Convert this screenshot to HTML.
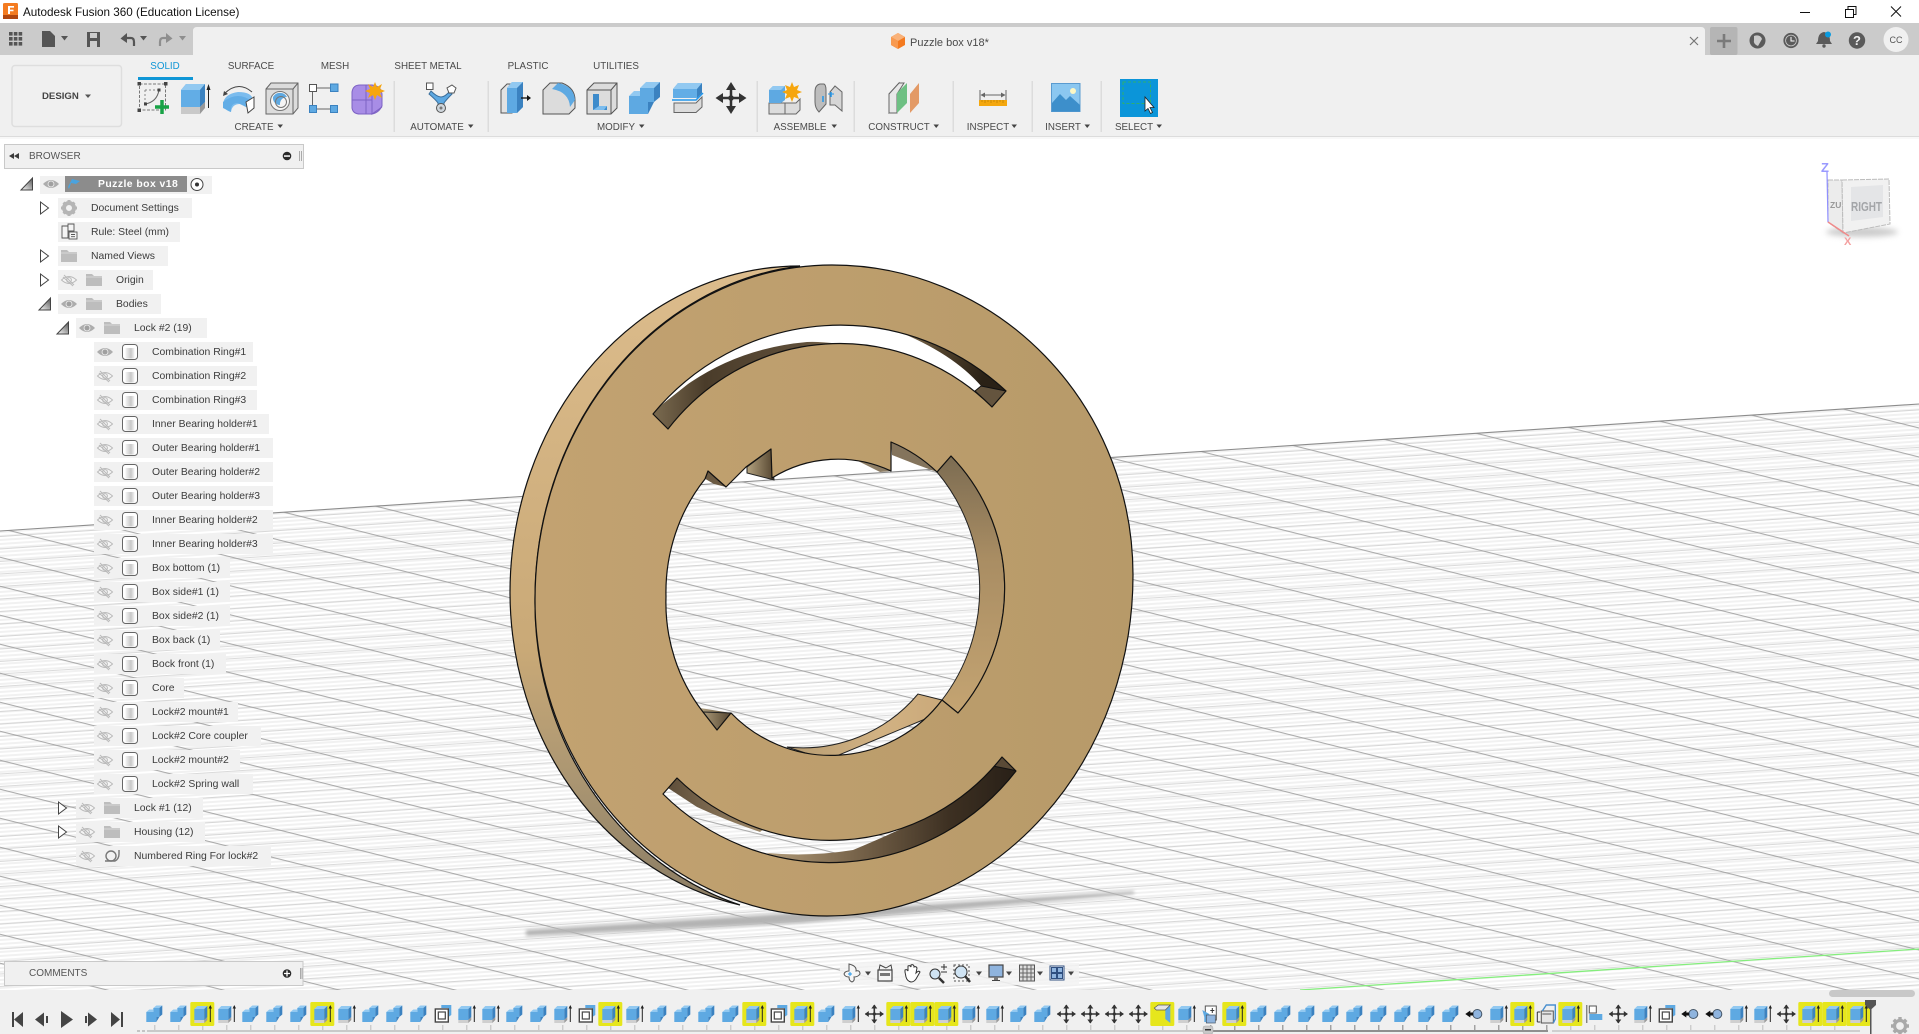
<!DOCTYPE html>
<html><head><meta charset="utf-8"><title>Autodesk Fusion 360</title>
<style>
html,body{margin:0;padding:0;width:1919px;height:1034px;overflow:hidden;background:#fff;font-family:"Liberation Sans",sans-serif}
svg.a{position:absolute;left:0;top:0}
.t{position:absolute;white-space:nowrap;line-height:14px;height:14px;font-size:10.4px;color:#3c3c3c}
.c{transform:translateX(-50%);font-size:9.8px;color:#4a4a4a}
.l{font-size:9.8px;color:#4a4a4a;transform:translateX(-50%)}
</style></head><body>
<svg class="a" width="1919" height="1034" viewBox="0 0 1919 1034" xmlns="http://www.w3.org/2000/svg">
<defs>
<pattern id="pf" width="200" height="4" patternUnits="userSpaceOnUse" patternTransform="matrix(1 -.066 0 1 0 531)"><rect width="200" height="4" fill="#fff"/><rect width="200" height="2" fill="#f1f1f1"/></pattern>
<pattern id="pa" width="200" height="29" patternUnits="userSpaceOnUse" patternTransform="matrix(1 .25 0 1 0 121.7)"><rect y="0" width="200" height="1.1" fill="#9c9c9c" fill-opacity=".85"/></pattern>
<pattern id="pb" width="200" height="12.5" patternUnits="userSpaceOnUse" patternTransform="matrix(1 -.066 0 1 0 548.5)"><rect y="0" width="200" height="1" fill="#cbcbcb" fill-opacity=".7"/></pattern>
<pattern id="tk" width="24" height="5" patternUnits="userSpaceOnUse" patternTransform="translate(154.3 1025)"><rect width="1" height="5" fill="#bdbdbd"/></pattern>
<pattern id="tk2" width="24" height="5" patternUnits="userSpaceOnUse" patternTransform="translate(154.3 1025)"><rect width="1" height="5" fill="#8a8a8a"/></pattern>
<linearGradient id="gface" x1="0" x2="1" y1="0" y2="0"><stop offset="0" stop-color="#c2a271"/><stop offset=".5" stop-color="#bd9e6d"/><stop offset="1" stop-color="#b79a69"/></linearGradient>
<linearGradient id="gside" gradientUnits="userSpaceOnUse" x1="650" y1="270" x2="650" y2="905"><stop offset="0" stop-color="#dcbc8c"/><stop offset=".6" stop-color="#c9a977"/><stop offset=".8" stop-color="#ab9672"/><stop offset="1" stop-color="#8a7c64"/></linearGradient>
<linearGradient id="gw1" gradientUnits="userSpaceOnUse" x1="650" y1="0" x2="870" y2="0"><stop offset="0" stop-color="#7d6d52"/><stop offset=".25" stop-color="#4a3c2a"/><stop offset=".7" stop-color="#5f4f3a"/><stop offset="1" stop-color="#a89272"/></linearGradient>
<linearGradient id="gw2" gradientUnits="userSpaceOnUse" x1="887" y1="325" x2="985" y2="375"><stop offset="0" stop-color="#9d8766"/><stop offset=".5" stop-color="#54452f"/><stop offset="1" stop-color="#2a2116"/></linearGradient>
<linearGradient id="gw3" gradientUnits="userSpaceOnUse" x1="767" y1="0" x2="1010" y2="0"><stop offset="0" stop-color="#b09a78"/><stop offset=".35" stop-color="#7a664c"/><stop offset=".75" stop-color="#3d3022"/><stop offset="1" stop-color="#2a2118"/></linearGradient>
<linearGradient id="gw4" gradientUnits="userSpaceOnUse" x1="665" y1="0" x2="765" y2="0"><stop offset="0" stop-color="#5c4c38"/><stop offset="1" stop-color="#a08a6a"/></linearGradient>
<linearGradient id="gw5" gradientUnits="userSpaceOnUse" x1="0" y1="456" x2="0" y2="713"><stop offset="0" stop-color="#7c6c52"/><stop offset=".4" stop-color="#a98d63"/><stop offset="1" stop-color="#c4a472"/></linearGradient>
<linearGradient id="gw6" gradientUnits="userSpaceOnUse" x1="787" y1="0" x2="942" y2="0"><stop offset="0" stop-color="#b69c72"/><stop offset=".6" stop-color="#d2b283"/><stop offset="1" stop-color="#caa97a"/></linearGradient>
<linearGradient id="gw7" x1="0" x2="1" y1="0" y2="0"><stop offset="0" stop-color="#b3a27f"/><stop offset="1" stop-color="#54442f"/></linearGradient>
<linearGradient id="gtri" x1="0" x2="1" y1="1" y2="0"><stop offset="0" stop-color="#fff"/><stop offset="1" stop-color="#555"/></linearGradient>
<linearGradient id="gb" x1="0" x2="1"><stop offset="0" stop-color="#f4f4f4"/><stop offset=".6" stop-color="#c8c8c8"/><stop offset="1" stop-color="#f4f4f4"/></linearGradient>

<g id="eye"><path d="M-8 0Q0-8 8 0Q0 8-8 0Z" fill="#adadad"/><circle r="3.4" fill="#e8e8e8"/><circle r="2.5" fill="#a0a0a0"/></g>
<g id="eo"><path d="M-7.500 0Q0-7 7.500 0Q0 7-7.500 0Z" fill="#f4f4f4" stroke="#bababa"/><circle r="2.400" fill="none" stroke="#bababa"/><path d="M-5-5L5 5M-6-3L4 6" stroke="#bababa"/></g>
<g id="fo"><path d="M-8-6H-2L0-4H8V6H-8Z" fill="#bdbdbd"/><path d="M-8-3H8" stroke="#d8d8d8"/></g>
<g id="bo"><rect x="-7.500" y="-7.500" width="15" height="15" rx="3" fill="#fff" stroke="#666"/><rect x="-4.500" y="-4" width="9" height="10.500" fill="url(#gb)"/></g>
<path id="tc" d="M-4-6L4 0L-4 6Z" fill="#fff" stroke="#444"/>
<path id="to" d="M-5.500 6L6 -6V6Z" fill="url(#gtri)" stroke="#444"/>

<g id="C"><path d="M-1-6H5V3H2V8H-8V-2H-1Z" fill="#5ea9e2"/><path d="M-1-6L2-8.500H8L5-6Z" fill="#92c9f1"/><path d="M5-6L8-8.500V.5L5 3Z" fill="#3b82c0"/><path d="M-8-2L-5-4.500H-1V-2Z" fill="#92c9f1"/><path d="M2 3H5L2 8Z" fill="#3b82c0"/></g>
<g id="ec"><path d="M-8-5H2V6H-8Z" fill="#5ea9e2"/><path d="M-8-5L-5-8H5L2-5Z" fill="#92c9f1"/><path d="M2-5L5-8V3L2 6Z" fill="#3b82c0"/><path d="M-8 6H2V9H-8Z" fill="#cfcfcf"/><path d="M2 6L5 3V6L2 9Z" fill="#9a9a9a"/><path d="M8-8V8" stroke="#222" fill="none"/><path d="M6.300-5.500L8-9L9.700-5.500Z" fill="#222"/></g>
<g id="E"><use href="#ec"/></g>
<g id="Y"><rect x="-12" y="-12" width="24" height="24" rx="1.500" fill="#e6e61c"/><use href="#ec"/></g>
<g id="S"><path d="M-1-9H9V1L6 3V-6H-1Z" fill="#5ea9e2"/><rect x="-7" y="-5" width="13" height="13" fill="#fff" stroke="#444" stroke-width="1.400"/><rect x="-4" y="-2" width="7" height="7" fill="#fff" stroke="#444" stroke-width="1.200"/></g>
<g id="M"><path d="M0-9V9M-9 0H9" stroke="#333" stroke-width="1.600"/><path d="M-3-5.500L0-9.500L3-5.500ZM-3 5.500L0 9.500L3 5.500ZM-5.500-3L-9.500 0L-5.500 3ZM5.500-3L9.500 0L5.500 3Z" fill="#333"/><circle r="1.600" fill="#333"/></g>
<g id="J"><circle cx="3" r="4.500" fill="#8fb4de" stroke="#456"/><path d="M-1 0H-5" stroke="#111" stroke-width="3"/><path d="M-4-3.500L-9 0L-4 3.500Z" fill="#111"/></g>
<g id="F"><rect x="-12" y="-12" width="24" height="24" rx="1.500" fill="#e6e61c"/><path d="M-8-6L-4-9H8L8 9L3 5V-4H-6Z" fill="#5ea9e2"/><path d="M-8-6L-4-9H8L3-4H-6Z" fill="#e5e5e5" stroke="#555" stroke-width=".7"/></g>
<g id="B"><path d="M-5-8H6V6H-5Z" fill="#fff" stroke="#555"/><path d="M-8-4L-1 0V8H-6V3Z" fill="#5ea9e2"/><rect x="-4" y="1" width="9" height="8" fill="#8fb4de" stroke="#456" stroke-width=".7"/><path d="M2-6V-1M0-3.500H4" stroke="#333"/></g>
<g id="D"><rect x="-5" y="-3" width="12" height="12" fill="#e6e6e6" stroke="#555"/><path d="M-4-3L0-9H9V5L7 9" fill="none" stroke="#4a90cf" stroke-width="1.400"/><path d="M-9-2V8M-9 8H-6M-9-2H-6" stroke="#333"/><path d="M-4 0H5" stroke="#555"/></g>
<g id="A"><path d="M-7.500-9V9" stroke="#555"/><rect x="-5" y="-8" width="7" height="7" fill="#fff" stroke="#555"/><rect x="-5" y="0" width="13" height="6" fill="#5ea9e2"/></g>
</defs>

<!-- viewport / ground -->
<rect x="0" y="139" width="1919" height="851" fill="#fff"/>
<polygon points="0,531 1919,404 1919,990 0,990" fill="url(#pf)"/>
<polygon points="0,531 1919,404 1919,990 0,990" fill="url(#pb)"/>
<polygon points="0,531 1919,404 1919,990 0,990" fill="url(#pa)"/>
<path d="M0 531L1919 404" stroke="#8c8c8c" stroke-width="1.100"/>
<path d="M1300 990L1919 949" stroke="#84ee7c" stroke-width="1.300"/>

<!-- ring shadow -->
<polygon points="526,930 1134,891 1134,894 800,923 526,936" fill="#b3b3b3" style="filter:blur(1.800px)"/>

<!-- outer side wall -->
<path d="M800 266A290 327 0 0 0 510 593A290 320 0 0 0 740 905A292 316 0 0 1 535 600A297 335 0 0 1 800 266Z" fill="url(#gside)" stroke="#111" stroke-width="1.200"/>

<!-- interior walls -->
<path d="M951 456A190 190 0 0 1 958 713L942 700A182 182 0 0 0 937 472Z" fill="url(#gw5)" stroke="#222"/>
<path d="M942 700L918 694A150 150 0 0 1 787 747L827 760L942 712Z" fill="url(#gw6)" stroke="#222"/>
<path d="M700 708L731 713L717 735Z" fill="url(#gw7)"/>
<path d="M703 712L731 713" stroke="#222"/>
<path d="M747 467L771 449L774 480L747 473Z" fill="url(#gw7)" stroke="#222"/>
<path d="M707 470L726 487L714 484L702 477Z" fill="#6b5a42"/>
<path d="M891 442Q915 452 937 472L915 464L892 455Z" fill="#84745c"/>
<path d="M856 460Q875 462 891 471L880 472Z" fill="#8d7d64"/>
<!-- slot walls -->
<path d="M650 414L668 435L750 380L870 352L867 349Q830 341 807 342Q740 348 688 384Z" fill="url(#gw1)"/>
<path d="M884 326Q950 350 981 386L975 391L992 412L1012 391L960 340Z" fill="url(#gw2)"/>
<path d="M981 386L1006 391L992 407L975 391Z" fill="#64543e" stroke="#111"/>
<path d="M668 788L697 807Q725 820 760 832L775 820L690 765Z" fill="url(#gw4)"/>
<path d="M767 853Q810 857 853 850Q920 822 953 802L993 766L1000 750L1025 772L980 830L900 870L800 870Z" fill="url(#gw3)"/>
<path d="M993 766L1002 755L1018 771Z" fill="#5a4a36" stroke="#111"/>

<!-- front face -->
<path fill-rule="evenodd" fill="url(#gface)" stroke="#111" stroke-width="1.200" stroke-linejoin="round" d="M535 600A297 335 0 0 1 832 265A301 310 0 0 1 1133 575A306 341 0 0 1 827 916A292 316 0 0 1 535 600Z
M653 414A245 250 0 0 1 1006 391L992 407A220 228 0 0 0 668 429Z
M663 794A236 236 0 0 0 1016 771L1002 757A219 219 0 0 1 677 778Z
M666 597A165 175 0 0 1 705 479L708 471L726 487L746 467L771 449L772 478A125 125 0 0 1 891 471L891 442A150 150 0 0 1 937 472L951 456A190 190 0 0 1 958 713L942 700A139 139 0 0 1 731 713L717 730L703 712A170 175 0 0 1 666 597Z"/>

<!-- nav cube -->
<g>
<ellipse cx="1862" cy="232" rx="36" ry="5" fill="#ccc" style="filter:blur(3px)"/>
<path d="M1828 180L1842 180L1843 233L1828 222Z" fill="#ececec" stroke="#bbb" stroke-dasharray="5 1"/>
<path d="M1842 180L1889 179L1890 224L1843 233Z" fill="#f1f1f1" stroke="#bbb" stroke-dasharray="5 1"/>
<path d="M1851 187L1883 185L1883 217L1851 221Z" fill="#e4e5e7"/>
<path d="M1827 172L1828 222" stroke="#8f8fff" stroke-width="1.200"/>
<path d="M1828 222L1849 236" stroke="#f08a8a" stroke-width="1.500"/>
<text x="1821" y="172" font-size="13" font-weight="bold" fill="#9a9aff" font-family="Liberation Sans,sans-serif">Z</text>
<text x="1844" y="245" font-size="11" font-weight="bold" fill="#f4a0a0" font-family="Liberation Sans,sans-serif">X</text>
<text x="1851" y="211" font-size="12.500" font-weight="bold" fill="#a3a5a8" font-family="Liberation Sans,sans-serif" textLength="31" lengthAdjust="spacingAndGlyphs">RIGHT</text>
<text x="1830" y="208" font-size="8.500" font-weight="bold" fill="#999" font-family="Liberation Sans,sans-serif">ZU</text>
</g>

<!-- chrome -->
<rect x="0" y="23" width="1919" height="32" fill="#cbcbcb"/>
<path d="M193 55V31Q193 27 197 27H1701Q1705 27 1705 31V55Z" fill="#f0f0f0"/>
<rect x="0" y="55" width="1919" height="81" fill="#f0f0f0"/>
<rect x="0" y="136" width="1919" height="1" fill="#dcdcdc"/>
<rect x="0" y="137" width="1919" height="2" fill="#f8f8f8"/>
<rect x="1710" y="27" width="27.500" height="28" rx="2" fill="#b5b5b5"/>
<path d="M1724 34V48M1717 41H1731" stroke="#7a7a7a" stroke-width="2.600"/>

<!-- app logo -->
<path d="M3 4Q3 3 5 3H17Q18 3 18 5V18Q18 19 17 19H5Q3 19 3 18Z" fill="#f47b20"/><rect x="3" y="15" width="15" height="4" fill="#b0460f"/>
<path d="M8 6H14V7.600H10V9.600H13.500V11.200H10V14H8Z" fill="#fff"/>

<!-- window controls -->
<path d="M1800 12.500H1810" stroke="#111"/>
<path d="M1845.500 9.500H1853.500V17.500H1845.500Z M1848 9.500V6.500H1856V14.500H1853.500" fill="none" stroke="#111"/>
<path d="M1891 6.500L1901 16.500M1901 6.500L1891 16.500" stroke="#111"/>

<!-- qat -->
<g fill="#555"><rect x="9" y="32" width="3.600" height="3.600"/><rect x="13.800" y="32" width="3.600" height="3.600"/><rect x="18.600" y="32" width="3.600" height="3.600"/><rect x="9" y="37" width="3.600" height="3.600"/><rect x="13.800" y="37" width="3.600" height="3.600"/><rect x="18.600" y="37" width="3.600" height="3.600"/><rect x="9" y="42" width="3.600" height="3.600"/><rect x="13.800" y="42" width="3.600" height="3.600"/><rect x="18.600" y="42" width="3.600" height="3.600"/>
<path d="M42 31H50L55 36V47H42Z"/><path d="M61 36H68L64.500 40.500Z"/>
<path d="M87 32H100V47H87Z"/><path d="M140 36H147L143.500 40.500Z"/></g>
<rect x="90" y="33" width="7" height="5" fill="#cbcbcb"/><rect x="90" y="41" width="7" height="6" fill="#cbcbcb"/>
<path d="M125 38H131Q134 38 134 42V46" fill="none" stroke="#555" stroke-width="2.200"/><path d="M127 33L120.500 38.500L127 43Z" fill="#555"/>
<path d="M168 38H163Q160 38 160 42V46" fill="none" stroke="#8e8e8e" stroke-width="2.200"/><path d="M166 33L172.500 38.500L166 43Z" fill="#8e8e8e"/><path d="M179 36H186L182.500 40.500Z" fill="#8e8e8e"/>

<!-- doc icon -->
<path d="M898 33L905 37V45L898 49L891 45V37Z" fill="#f47a1f"/><path d="M898 33L905 37L898 41L891 37Z" fill="#f9b27a"/><path d="M891 37L898 41V49L891 45Z" fill="#f89a50"/>
<path d="M1690 37L1698 45M1698 37L1690 45" stroke="#777" stroke-width="1.200"/>

<!-- top-right icons -->
<circle cx="1757.500" cy="40.500" r="8" fill="#5a5a5a"/><path d="M1754 36Q1760 34 1762 39L1758 46Q1753 44 1754 40Z" fill="#cbcbcb"/><circle cx="1791" cy="40.500" r="8" fill="#5a5a5a" stroke="#cbcbcb" stroke-width=".8"/><circle cx="1791" cy="40.500" r="5.400" fill="none" stroke="#cbcbcb" stroke-width=".8"/><path d="M1791 37V41H1794.500" stroke="#fff" fill="none"/>
<path d="M1824 32Q1830 33 1830 41L1832 44H1816L1818 41Q1818 33 1824 32Z" fill="#5a5a5a"/><circle cx="1824" cy="46" r="1.700" fill="#5a5a5a"/><circle cx="1828" cy="34.500" r="3" fill="#0a9be0"/>
<circle cx="1857" cy="40.500" r="8.200" fill="#5a5a5a"/><text x="1857" y="45" text-anchor="middle" font-size="13" font-weight="bold" fill="#f0f0f0" font-family="Liberation Sans,sans-serif">?</text>
<circle cx="1896" cy="39.500" r="12.500" fill="#f0f0f0"/>

<!-- design button -->
<rect x="12" y="65.500" width="109.500" height="61" rx="3" fill="#f0f0f0" stroke="#dedede" stroke-width="1.500"/>
<path d="M85 94.500H91L88 98Z" fill="#555"/>
<!-- tab underline -->
<rect x="138" y="77" width="55" height="3" fill="#0f96d6"/>
<!-- separators -->
<g fill="#dcdcdc"><rect x="393.500" y="81" width="1.500" height="51"/><rect x="487.500" y="81" width="1.500" height="51"/><rect x="756.500" y="81" width="1.500" height="51"/><rect x="853.500" y="81" width="1.500" height="51"/><rect x="952.500" y="81" width="1.500" height="51"/><rect x="1031.500" y="81" width="1.500" height="51"/><rect x="1100.500" y="81" width="1.500" height="51"/></g>

<!-- carets -->
<g fill="#444"><path d="M277.500 124.500H283L280.200 128Z"/><path d="M468 124.500H473.500L470.700 128Z"/><path d="M639 124.500H644.500L641.700 128Z"/><path d="M831.500 124.500H837L834.200 128Z"/><path d="M933.500 124.500H939L936.200 128Z"/><path d="M1011.500 124.500H1017L1014.200 128Z"/><path d="M1084.500 124.500H1090L1087.200 128Z"/><path d="M1156.500 124.500H1162L1159.200 128Z"/></g>

<!-- sketch -->
<g>
<rect x="139.500" y="84" width="26" height="26" fill="none" stroke="#777" stroke-dasharray="3 1.500"/>
<g fill="#444"><rect x="137.500" y="82" width="3.500" height="3.500"/><rect x="164" y="82" width="3.500" height="3.500"/><rect x="137.500" y="108.500" width="3.500" height="3.500"/></g>
<path d="M145 104Q157 102 159 90" fill="none" stroke="#666"/><path d="M145 90H159M145 90V104" stroke="#888" stroke-dasharray="2 2"/><rect x="144" y="102.500" width="3" height="3" fill="#444"/><rect x="157.500" y="88.500" width="3" height="3" fill="#444"/>
<path d="M162 100V114M155 107H169" stroke="#18a246" stroke-width="3.500"/>
</g>
<!-- extrude -->
<path d="M181 90L186 84H205V102L200 107H181Z" fill="#62ade6"/><path d="M181 90L186 84H205L200 90Z" fill="#92c9f1"/><path d="M200 90L205 84V102L200 107Z" fill="#3b82c0"/><path d="M181 107H200V114H181Z" fill="#c9c9c9"/><path d="M200 107L205 102V108L200 114Z" fill="#999"/><path d="M208.500 87V108" stroke="#222"/><path d="M206.500 90L208.500 84L210.500 90Z" fill="#222"/>
<!-- revolve -->
<path d="M223 104Q224 94 238 92Q252 92 253 100L249 108L240 104Q232 104 231 112Q224 110 223 104Z" fill="#7bbcee"/><path d="M223 102Q238 90 253 102L248 108L238 103Q230 103 231 112L223 108Z" fill="#62ade6"/><path d="M246 102L254 97V108L248 113Z" fill="#fff" stroke="#444"/><path d="M224 94Q238 80 252 92" fill="none" stroke="#444"/><path d="M224 91L223 96L228 94Z" fill="#444"/>
<!-- hole -->
<path d="M266 89L271 83H298V108L293 114H266Z" fill="#dcdcdc" stroke="#666"/><path d="M266 89H293V114M293 89L298 83" fill="none" stroke="#666"/><circle cx="280" cy="101" r="9.500" fill="#f5f5f5" stroke="#777"/><path d="M273 97A8 8 0 0 1 287 97A7 7 0 0 0 280 105A7 7 0 0 1 273 97Z" fill="#5ea9e2"/><circle cx="281" cy="102" r="5.500" fill="none" stroke="#777"/>
<!-- rectangular pattern -->
<path d="M316 88H330M312.500 92V105M316 109H330" stroke="#666"/><rect x="309.500" y="84.500" width="7" height="7" fill="#fff" stroke="#555"/><rect x="330.500" y="84" width="7.500" height="7.500" fill="#5ea9e2" stroke="#3b82c0"/><rect x="309.500" y="105.500" width="7" height="7" fill="#5ea9e2" stroke="#3b82c0"/><rect x="330.500" y="105.500" width="7" height="7" fill="#5ea9e2" stroke="#3b82c0"/>
<!-- form -->
<path d="M352 92Q353 85 360 85H372Q381 86 382 94V106Q378 114 370 114H360Q353 114 352 108Z" fill="#a88de6" stroke="#7d62c4"/><path d="M352 100H372M366 85V114M372 93V114L382 107" stroke="#7d62c4" fill="none"/><path d="M375 82L377 87L382 84L380 89L385 91L380 93L382 98L377 95L375 100L373 95L368 98L370 93L365 91L370 89L368 84L373 87Z" fill="#f6a60e"/>
<!-- automate -->
<path d="M431 91Q437 97 441 97Q445 97 450 91L452 94Q446 100 444 103V108H438V103Q436 100 429 94Z" fill="#5ea9e2" stroke="#3b6f9c"/><rect x="426.500" y="83" width="6.500" height="6.500" fill="#fff" stroke="#555"/><path d="M452 85L456 88L454 93L449 93L447 88Z" fill="#fff" stroke="#555"/><circle cx="441" cy="108" r="4.500" fill="#cfd6dc" stroke="#555"/><circle cx="441" cy="108" r="1.500" fill="#777"/>
<!-- press pull -->
<path d="M501 90L507 84H512V113H501Z" fill="#e2e2e2" stroke="#555"/><path d="M507 88L512 82H523V107L517 113H507Z" fill="#5ea9e2"/><path d="M507 88L512 82H523L517 88Z" fill="#92c9f1"/><path d="M517 88L523 82V107L517 113Z" fill="#3b82c0"/><path d="M521 98H529" stroke="#111" stroke-width="1.300"/><path d="M527 95L531 98L527 101Z" fill="#111"/>
<!-- fillet -->
<path d="M543 90L550 83H562Q575 88 575 100V108L569 114H543Z" fill="#dcdcdc" stroke="#555"/><path d="M558 83Q574 86 575 100L570 107Q569 92 552 89Z" fill="#5ea9e2"/>
<!-- chamfer -->
<path d="M587 90L594 83H617V108L611 114H587Z" fill="#dcdcdc" stroke="#555"/><path d="M587 90H611V114M611 90L617 83" fill="none" stroke="#555"/><path d="M593 94H599V106H607V110H593Z" fill="#3d8bcb"/><path d="M599 106H607L604 110H593Z" fill="#7bbcee"/>
<!-- combine large -->
<path d="M640 88H654V102H648V114H629V96H640Z" fill="#5ea9e2"/><path d="M640 88L646 82H660L654 88Z" fill="#92c9f1"/><path d="M654 88L660 82V97L654 102Z" fill="#3b82c0"/><path d="M629 96L634 91H640V96Z" fill="#92c9f1"/><path d="M648 102H654L648 114Z" fill="#3b82c0"/>
<!-- split -->
<path d="M673 89L678 83H702V93L697 98H673Z" fill="#62ade6"/><path d="M673 89L678 83H702L697 89Z" fill="#92c9f1"/><path d="M697 89L702 83V93L697 98Z" fill="#3b82c0"/><path d="M672 100H696L703 93" stroke="#2196ea" stroke-width="1.500" fill="none"/><path d="M674 103H696L702 97V107L696 112.500H674Z" fill="#dcdcdc" stroke="#666"/>
<!-- move -->
<path d="M731 88V108M721 98H741" stroke="#333" stroke-width="2.500"/><path d="M726 90L731 82L736 90ZM726 106L731 114L736 106ZM723 93L715.500 98L723 103ZM739 93L746.500 98L739 103Z" fill="#333"/><circle cx="731" cy="98" r="2.800" fill="#333"/>
<!-- assemble -->
<path d="M769 103H785V114H769Z" fill="#dcdcdc" stroke="#666"/><path d="M785 103H796L800 99V110L796 114H785Z" fill="#dcdcdc" stroke="#666"/><path d="M769 90L773 86H785V100L781 103H769Z" fill="#5ea9e2"/><path d="M769 90L773 86H785L781 90Z" fill="#92c9f1"/><path d="M792 82L794 87L799 85L797 90L802 92L797 94L799 99L794 97L792 102L790 97L785 99L787 94L782 92L787 90L785 85L790 87Z" fill="#f6a60e"/>
<!-- joint -->
<path d="M815 92Q815 85 820 84H824Q826 85 826 90V104L819 112Q815 108 815 102Z" fill="#bdbdbd" stroke="#666"/><path d="M830 92L835 86L842 92V111L835 105H830Z" fill="#d6d6d6" stroke="#666"/><path d="M823 96V102M831 92V97" stroke="#2196ea" stroke-width="1.500"/><path d="M828 94H834" stroke="#2196ea"/>
<!-- construct -->
<path d="M889 94L899 83V106L889 113Z" fill="#e0e0e0" stroke="#555"/><path d="M889 94L899 83H904L897 94V113H889Z" fill="#e8e8e8" stroke="#666"/><path d="M897 93L907 83V103L897 113Z" fill="#6ec083"/><path d="M910 94L919 83V103L910 113Z" fill="#e39a66"/>
<!-- inspect -->
<path d="M980 90V100M1006 90V100" stroke="#666"/><path d="M981 95H1005" stroke="#666"/><path d="M985 92.500L980.500 95L985 97.500ZM1001 92.500L1005.500 95L1001 97.500Z" fill="#666"/><rect x="979" y="100" width="28" height="6" fill="#f4a70e"/><path d="M982 100v2M985 100v3M988 100v2M991 100v3M994 100v2M997 100v3M1000 100v2M1003 100v3" stroke="#b87c00" stroke-width=".7"/>
<!-- insert -->
<rect x="1051.500" y="83.500" width="28.500" height="28" fill="#8bc7f0" stroke="#5a9bd0"/><path d="M1052 109V103L1060 94L1066 100L1070 96L1080 105V111.500H1052Z" fill="#3d8fcb"/><circle cx="1073" cy="91" r="3" fill="#fdf7c4"/>
<!-- select -->
<rect x="1120" y="79" width="38" height="38" fill="#0b95d9"/><rect x="1123" y="82" width="27.500" height="21.500" fill="none" stroke="#2fae6f" stroke-dasharray="3 2"/>
<path d="M1145 97V111L1148 108.500L1150.500 113.500L1152.500 112.500L1150 107.500L1154 107.500Z" fill="#fff" stroke="#222" stroke-width=".8"/>

<!-- browser panel -->
<rect x="4.500" y="144.500" width="299" height="24" fill="#f0f0f0" stroke="#c9c9c9"/>
<path d="M14 153V159L9 156ZM19 153V159L14 156Z" fill="#3a3a3a"/><circle cx="287" cy="156" r="4.300" fill="#2a2a2a"/><rect x="284" y="155.300" width="6" height="1.500" fill="#fff"/><path d="M299.500 151V161M301.500 151V161" stroke="#999" stroke-width=".8"/>

<!-- tree backgrounds -->
<g fill="#f1f1f1">
<rect x="40" y="176" width="172" height="18"/>
<rect x="58" y="198" width="134" height="20"/>
<rect x="58" y="222" width="122" height="20"/>
<rect x="58" y="246" width="110" height="20"/>
<rect x="58" y="270" width="95" height="20"/>
<rect x="58" y="294" width="103" height="20"/>
<rect x="76" y="318" width="131" height="20"/>
<rect x="94" y="342" width="159" height="20"/>
<rect x="94" y="366" width="163" height="20"/>
<rect x="94" y="390" width="163" height="20"/>
<rect x="94" y="414" width="175" height="20"/>
<rect x="94" y="438" width="179" height="20"/>
<rect x="94" y="462" width="179" height="20"/>
<rect x="94" y="486" width="179" height="20"/>
<rect x="94" y="510" width="179" height="20"/>
<rect x="94" y="534" width="179" height="20"/>
<rect x="94" y="558" width="136" height="20"/>
<rect x="94" y="582" width="136" height="20"/>
<rect x="94" y="606" width="136" height="20"/>
<rect x="94" y="630" width="126" height="20"/>
<rect x="94" y="654" width="132" height="20"/>
<rect x="94" y="678" width="90" height="20"/>
<rect x="94" y="702" width="144" height="20"/>
<rect x="94" y="726" width="167" height="20"/>
<rect x="94" y="750" width="146" height="20"/>
<rect x="94" y="774" width="159" height="20"/>
<rect x="76" y="798" width="127" height="20"/>
<rect x="76" y="822" width="129" height="20"/>
<rect x="76" y="846" width="195" height="20"/>
</g>
<rect x="65" y="176" width="122" height="16" fill="#8c8c8c"/>
<path d="M68 187L72 179L80 181L76 184L71 183L69 189Z" fill="#4aa3df"/>
<circle cx="197" cy="184.500" r="6" fill="#fff" stroke="#444"/><circle cx="197" cy="184.500" r="2" fill="#333"/>
<use href="#eye" x="51" y="184"/>
<use href="#to" x="26.500" y="184"/>
<use href="#tc" x="44.500" y="208"/><use href="#tc" x="44.500" y="256"/><use href="#tc" x="44.500" y="280"/>
<use href="#to" x="44.500" y="304"/><use href="#to" x="62.500" y="328"/>
<use href="#tc" x="62.500" y="808"/><use href="#tc" x="62.500" y="832"/>
<!-- gear -->
<g transform="translate(69 208)"><circle r="5" fill="none" stroke="#b5b5b5" stroke-width="4"/><path d="M-1.500-8H1.500V-5H-1.500ZM-1.500 5H1.500V8H-1.500ZM-8-1.500H-5V1.500H-8ZM5-1.500H8V1.500H5ZM-6.500-4.500L-4.500-6.500L-2.500-4.500L-4.500-2.500ZM6.500-4.500L4.500-6.500L2.500-4.500L4.500-2.500ZM-6.500 4.500L-4.500 6.500L-2.500 4.500L-4.500 2.500ZM6.500 4.500L4.500 6.500L2.500 4.500L4.500 2.500Z" fill="#b5b5b5"/></g>
<!-- rule icon -->
<g transform="translate(69 232)" fill="#f4f4f4" stroke="#555" stroke-width=".9"><path d="M-7-6H-1V6H-7Z"/><path d="M-1-8H5V-1H-1Z"/><rect x="0" y="0" width="8" height="7"/><path d="M2 2.500H6M2 4.700H6" fill="none"/></g>
<use href="#fo" x="69" y="256"/>
<use href="#eo" x="69" y="280"/><use href="#fo" x="94" y="280"/>
<use href="#eye" x="69" y="304"/><use href="#fo" x="94" y="304"/>
<use href="#eye" x="87" y="328"/><use href="#fo" x="112" y="328"/>
<use href="#eye" x="105" y="352"/>
<use href="#eo" x="105" y="376"/><use href="#eo" x="105" y="400"/><use href="#eo" x="105" y="424"/><use href="#eo" x="105" y="448"/><use href="#eo" x="105" y="472"/><use href="#eo" x="105" y="496"/><use href="#eo" x="105" y="520"/><use href="#eo" x="105" y="544"/><use href="#eo" x="105" y="568"/><use href="#eo" x="105" y="592"/><use href="#eo" x="105" y="616"/><use href="#eo" x="105" y="640"/><use href="#eo" x="105" y="664"/><use href="#eo" x="105" y="688"/><use href="#eo" x="105" y="712"/><use href="#eo" x="105" y="736"/><use href="#eo" x="105" y="760"/><use href="#eo" x="105" y="784"/>
<use href="#bo" x="130" y="352"/><use href="#bo" x="130" y="376"/><use href="#bo" x="130" y="400"/><use href="#bo" x="130" y="424"/><use href="#bo" x="130" y="448"/><use href="#bo" x="130" y="472"/><use href="#bo" x="130" y="496"/><use href="#bo" x="130" y="520"/><use href="#bo" x="130" y="544"/><use href="#bo" x="130" y="568"/><use href="#bo" x="130" y="592"/><use href="#bo" x="130" y="616"/><use href="#bo" x="130" y="640"/><use href="#bo" x="130" y="664"/><use href="#bo" x="130" y="688"/><use href="#bo" x="130" y="712"/><use href="#bo" x="130" y="736"/><use href="#bo" x="130" y="760"/><use href="#bo" x="130" y="784"/>
<use href="#eo" x="87" y="808"/><use href="#fo" x="112" y="808"/>
<use href="#eo" x="87" y="832"/><use href="#fo" x="112" y="832"/>
<use href="#eo" x="87" y="856"/>
<g transform="translate(112 856)" fill="none" stroke="#777" stroke-width="1.400"><circle cx="-1" cy="0" r="5"/><path d="M-7 5H3Q7 3 7-2V-6"/></g>

<!-- comments -->
<rect x="4.500" y="961.500" width="298.500" height="24" fill="#f0f0f0" stroke="#c9c9c9"/>
<circle cx="287" cy="973.500" r="4.300" fill="#2a2a2a"/><path d="M284 973.500H290M287 970.500V976.500" stroke="#fff" stroke-width="1.300"/><path d="M300.500 968V979M302 968V979" stroke="#999" stroke-width=".8"/>

<!-- navbar -->
<rect x="840" y="963" width="239" height="22" fill="#f3f3f3" fill-opacity=".85"/>
<g transform="translate(852 973)" fill="none" stroke="#555"><path d="M-3-9Q5-7 4-2Q8-3 8 1Q6 4 2 4Q3 8 0 9Q-3 8-3 4Q-7 4-8 1Q-7-2-3-2Z" fill="#f5f5f5"/><path d="M-2-1V3M-4 1H0" stroke="#2196ea"/></g>
<path d="M865 971.500H871L868 975.500ZM976 971.500H982L979 975.500ZM1006 971.500H1012L1009 975.500ZM1037 971.500H1043L1040 975.500ZM1068 971.500H1074L1071 975.500Z" fill="#444"/>
<g transform="translate(885 973)"><rect x="-7" y="-3" width="14" height="11" fill="#f5f5f5" stroke="#444" stroke-width="1.200"/><rect x="-5" y="0" width="10" height="3" fill="#777"/><path d="M-6-3L-5-8L1-5M1-5L6-8L7-3" fill="none" stroke="#444"/></g>
<g transform="translate(911 973)" fill="#fff" stroke="#333" stroke-width="1"><path d="M-6-1V-3Q-4-4-3-2V-7Q-1-8 0-6V-8Q2-9 3-7V-6Q5-7 6-5L5 0Q8-3 9-1L5 6Q3 9 0 9Q-4 8-5 4Z"/></g>
<g transform="translate(937 973)" fill="none" stroke="#333"><circle cx="-2" cy="1" r="5" fill="#cfe3f3"/><path d="M2 5L7 10" stroke-width="2.500"/><path d="M4-6H10M7-9V-3M4-1H10"/></g>
<g transform="translate(962 973)"><rect x="-8" y="-8" width="15" height="16" fill="none" stroke="#555" stroke-dasharray="2 2"/><circle cx="-1" cy="-1" r="6" fill="#cfe3f3" stroke="#333"/><path d="M3 3L8 9" stroke="#333" stroke-width="2.500"/></g>
<g transform="translate(996 973)"><rect x="-7" y="-8" width="14" height="12" fill="#8fb4de" stroke="#444" stroke-width="1.200"/><rect x="-2" y="4" width="4" height="3" fill="#777"/><path d="M-4 7.500H4" stroke="#444"/></g>
<g transform="translate(1027 973)"><rect x="-7.500" y="-8" width="15" height="16" fill="#ddd" stroke="#555"/><path d="M-4-8V8M0-8V8M4-8V8M-7.500-4H7.500M-7.500 0H7.500M-7.500 4H7.500" stroke="#666"/></g>
<g transform="translate(1057 973)" fill="#8fb4de" stroke="#2f4f80"><rect x="-7" y="-7" width="14" height="14" fill="#fff"/><rect x="-5.500" y="-5.500" width="5" height="5"/><rect x=".5" y="-5.500" width="5" height="5"/><rect x="-5.500" y=".5" width="5" height="5"/><rect x=".5" y=".5" width="5" height="5"/></g>

<!-- timeline -->
<rect x="0" y="990" width="1919" height="44" fill="#f0f0f0"/>
<rect x="1829" y="990" width="86" height="7" rx="3.500" fill="#c8c8c8"/>
<g fill="#444"><rect x="12" y="1012" width="2" height="15"/><path d="M23 1012V1027L14 1019.500Z"/>
<path d="M35 1019.500L44 1012.500V1026.500Z"/><rect x="46" y="1016" width="2" height="7"/>
<path d="M61 1011V1028L73 1019.500Z"/>
<rect x="85" y="1016" width="2" height="7"/><path d="M88 1012.500V1026.500L97 1019.500Z"/>
<path d="M111 1012V1027L120 1019.500Z"/><rect x="121" y="1012" width="2" height="15"/></g>
<rect x="137" y="1030" width="3" height="2" fill="#c4c4c4"/><rect x="142" y="1030" width="3" height="2" fill="#c4c4c4"/><rect x="147" y="1030" width="1061" height="2" fill="#c9c9c9"/>
<rect x="154" y="1025" width="1704" height="5" fill="url(#tk)"/>
<rect x="1204" y="1025" width="344" height="5" fill="url(#tk2)"/>
<rect x="1208" y="1030" width="340" height="2" fill="#8f8f8f"/>
<rect x="1552" y="1030" width="308" height="2" fill="#cfcfcf"/>
<rect x="1203" y="1026" width="10" height="8" rx="2" fill="#c8c8c8" stroke="#aaa" stroke-width=".5"/><rect x="1205" y="1029" width="6" height="1.500" fill="#333"/>
<g transform="translate(154.300 1014)">
<use href="#C"/><use href="#C" x="24"/><use href="#Y" x="48"/><use href="#E" x="72"/><use href="#C" x="96"/><use href="#C" x="120"/><use href="#C" x="144"/><use href="#Y" x="168"/><use href="#E" x="192"/><use href="#C" x="216"/><use href="#C" x="240"/><use href="#C" x="264"/><use href="#S" x="288"/><use href="#E" x="312"/><use href="#E" x="336"/><use href="#C" x="360"/><use href="#C" x="384"/><use href="#E" x="408"/><use href="#S" x="432"/><use href="#Y" x="456"/><use href="#E" x="480"/><use href="#C" x="504"/><use href="#C" x="528"/><use href="#C" x="552"/><use href="#C" x="576"/><use href="#Y" x="600"/><use href="#S" x="624"/><use href="#Y" x="648"/><use href="#C" x="672"/><use href="#E" x="696"/><use href="#M" x="720"/><use href="#Y" x="744"/><use href="#Y" x="768"/><use href="#Y" x="792"/><use href="#E" x="816"/><use href="#E" x="840"/><use href="#C" x="864"/><use href="#C" x="888"/><use href="#M" x="912"/><use href="#M" x="936"/><use href="#M" x="960"/><use href="#M" x="984"/><use href="#F" x="1008"/><use href="#E" x="1032"/><use href="#B" x="1056"/><use href="#Y" x="1080"/><use href="#C" x="1104"/><use href="#C" x="1128"/><use href="#C" x="1152"/><use href="#C" x="1176"/><use href="#C" x="1200"/><use href="#C" x="1224"/><use href="#C" x="1248"/><use href="#C" x="1272"/><use href="#C" x="1296"/><use href="#J" x="1320"/><use href="#E" x="1344"/><use href="#Y" x="1368"/><use href="#D" x="1392"/><use href="#Y" x="1416"/><use href="#A" x="1440"/><use href="#M" x="1464"/><use href="#E" x="1488"/><use href="#S" x="1512"/><use href="#J" x="1536"/><use href="#J" x="1560"/><use href="#E" x="1584"/><use href="#E" x="1608"/><use href="#M" x="1632"/><use href="#Y" x="1656"/><use href="#Y" x="1680"/><use href="#Y" x="1704"/>
</g>
<path d="M1865 1000H1876V1005L1870.500 1010L1865 1005Z" fill="#555"/><rect x="1870" y="1008" width="1.500" height="26" fill="#555"/>
<g transform="translate(1900 1026)" fill="#a9a9a9"><circle r="5.500" fill="none" stroke="#a9a9a9" stroke-width="3.200"/><path d="M-1.700-9H1.700V-5H-1.700ZM-1.700 5H1.700V9H-1.700ZM-9-1.700H-5V1.700H-9ZM5-1.700H9V1.700H5ZM-7.500-5L-5-7.500L-2.500-5L-5-2.500ZM7.500-5L5-7.500L2.500-5L5-2.500ZM-7.500 5L-5 7.500L-2.500 5L-5 2.500ZM7.500 5L5 7.500L2.500 5L5 2.500Z"/></g>
</svg>

<div class="t" style="left:23px;top:5.500px;font-size:11.7px;color:#111">Autodesk Fusion 360 (Education License)</div>
<div class="t" style="left:910px;top:35.500px;font-size:11px;color:#4a4a4a">Puzzle box v18*</div>
<div class="t" style="left:1896px;top:33px;font-size:9px;color:#555;transform:translateX(-50%)">CC</div>
<div class="t" style="left:42px;top:90px;font-size:9.6px;font-weight:bold;color:#444">DESIGN</div>

<div class="t c" style="left:165px;top:60px;color:#0f96d6">SOLID</div>
<div class="t c" style="left:251px;top:60px">SURFACE</div>
<div class="t c" style="left:335px;top:60px">MESH</div>
<div class="t c" style="left:428px;top:60px">SHEET METAL</div>
<div class="t c" style="left:528px;top:60px">PLASTIC</div>
<div class="t c" style="left:616px;top:60px">UTILITIES</div>

<div class="t l" style="left:254px;top:121px">CREATE</div>
<div class="t l" style="left:437px;top:121px">AUTOMATE</div>
<div class="t l" style="left:616px;top:121px">MODIFY</div>
<div class="t l" style="left:800px;top:121px">ASSEMBLE</div>
<div class="t l" style="left:899px;top:121px">CONSTRUCT</div>
<div class="t l" style="left:988px;top:121px">INSPECT</div>
<div class="t l" style="left:1063px;top:121px">INSERT</div>
<div class="t l" style="left:1134px;top:121px">SELECT</div>

<div class="t" style="left:29px;top:150px;font-size:10px;color:#555">BROWSER</div>
<div class="t" style="left:29px;top:967px;font-size:10px;color:#555">COMMENTS</div>

<div class="t" style="left:98px;top:178px;font-weight:bold;color:#fff;font-size:10.4px;letter-spacing:.45px">Puzzle box v18</div>
<div class="t" style="left:91px;top:202px">Document Settings</div>
<div class="t" style="left:91px;top:226px">Rule: Steel (mm)</div>
<div class="t" style="left:91px;top:250px">Named Views</div>
<div class="t" style="left:116px;top:274px">Origin</div>
<div class="t" style="left:116px;top:298px">Bodies</div>
<div class="t" style="left:134px;top:322px">Lock #2 (19)</div>
<div class="t" style="left:152px;top:346px">Combination Ring#1</div>
<div class="t" style="left:152px;top:370px">Combination Ring#2</div>
<div class="t" style="left:152px;top:394px">Combination Ring#3</div>
<div class="t" style="left:152px;top:418px">Inner Bearing holder#1</div>
<div class="t" style="left:152px;top:442px">Outer Bearing holder#1</div>
<div class="t" style="left:152px;top:466px">Outer Bearing holder#2</div>
<div class="t" style="left:152px;top:490px">Outer Bearing holder#3</div>
<div class="t" style="left:152px;top:514px">Inner Bearing holder#2</div>
<div class="t" style="left:152px;top:538px">Inner Bearing holder#3</div>
<div class="t" style="left:152px;top:562px">Box bottom (1)</div>
<div class="t" style="left:152px;top:586px">Box side#1 (1)</div>
<div class="t" style="left:152px;top:610px">Box side#2 (1)</div>
<div class="t" style="left:152px;top:634px">Box back (1)</div>
<div class="t" style="left:152px;top:658px">Bock front (1)</div>
<div class="t" style="left:152px;top:682px">Core</div>
<div class="t" style="left:152px;top:706px">Lock#2 mount#1</div>
<div class="t" style="left:152px;top:730px">Lock#2 Core coupler</div>
<div class="t" style="left:152px;top:754px">Lock#2 mount#2</div>
<div class="t" style="left:152px;top:778px">Lock#2 Spring wall</div>
<div class="t" style="left:134px;top:802px">Lock #1 (12)</div>
<div class="t" style="left:134px;top:826px">Housing (12)</div>
<div class="t" style="left:134px;top:850px">Numbered Ring For lock#2</div>
</body></html>
